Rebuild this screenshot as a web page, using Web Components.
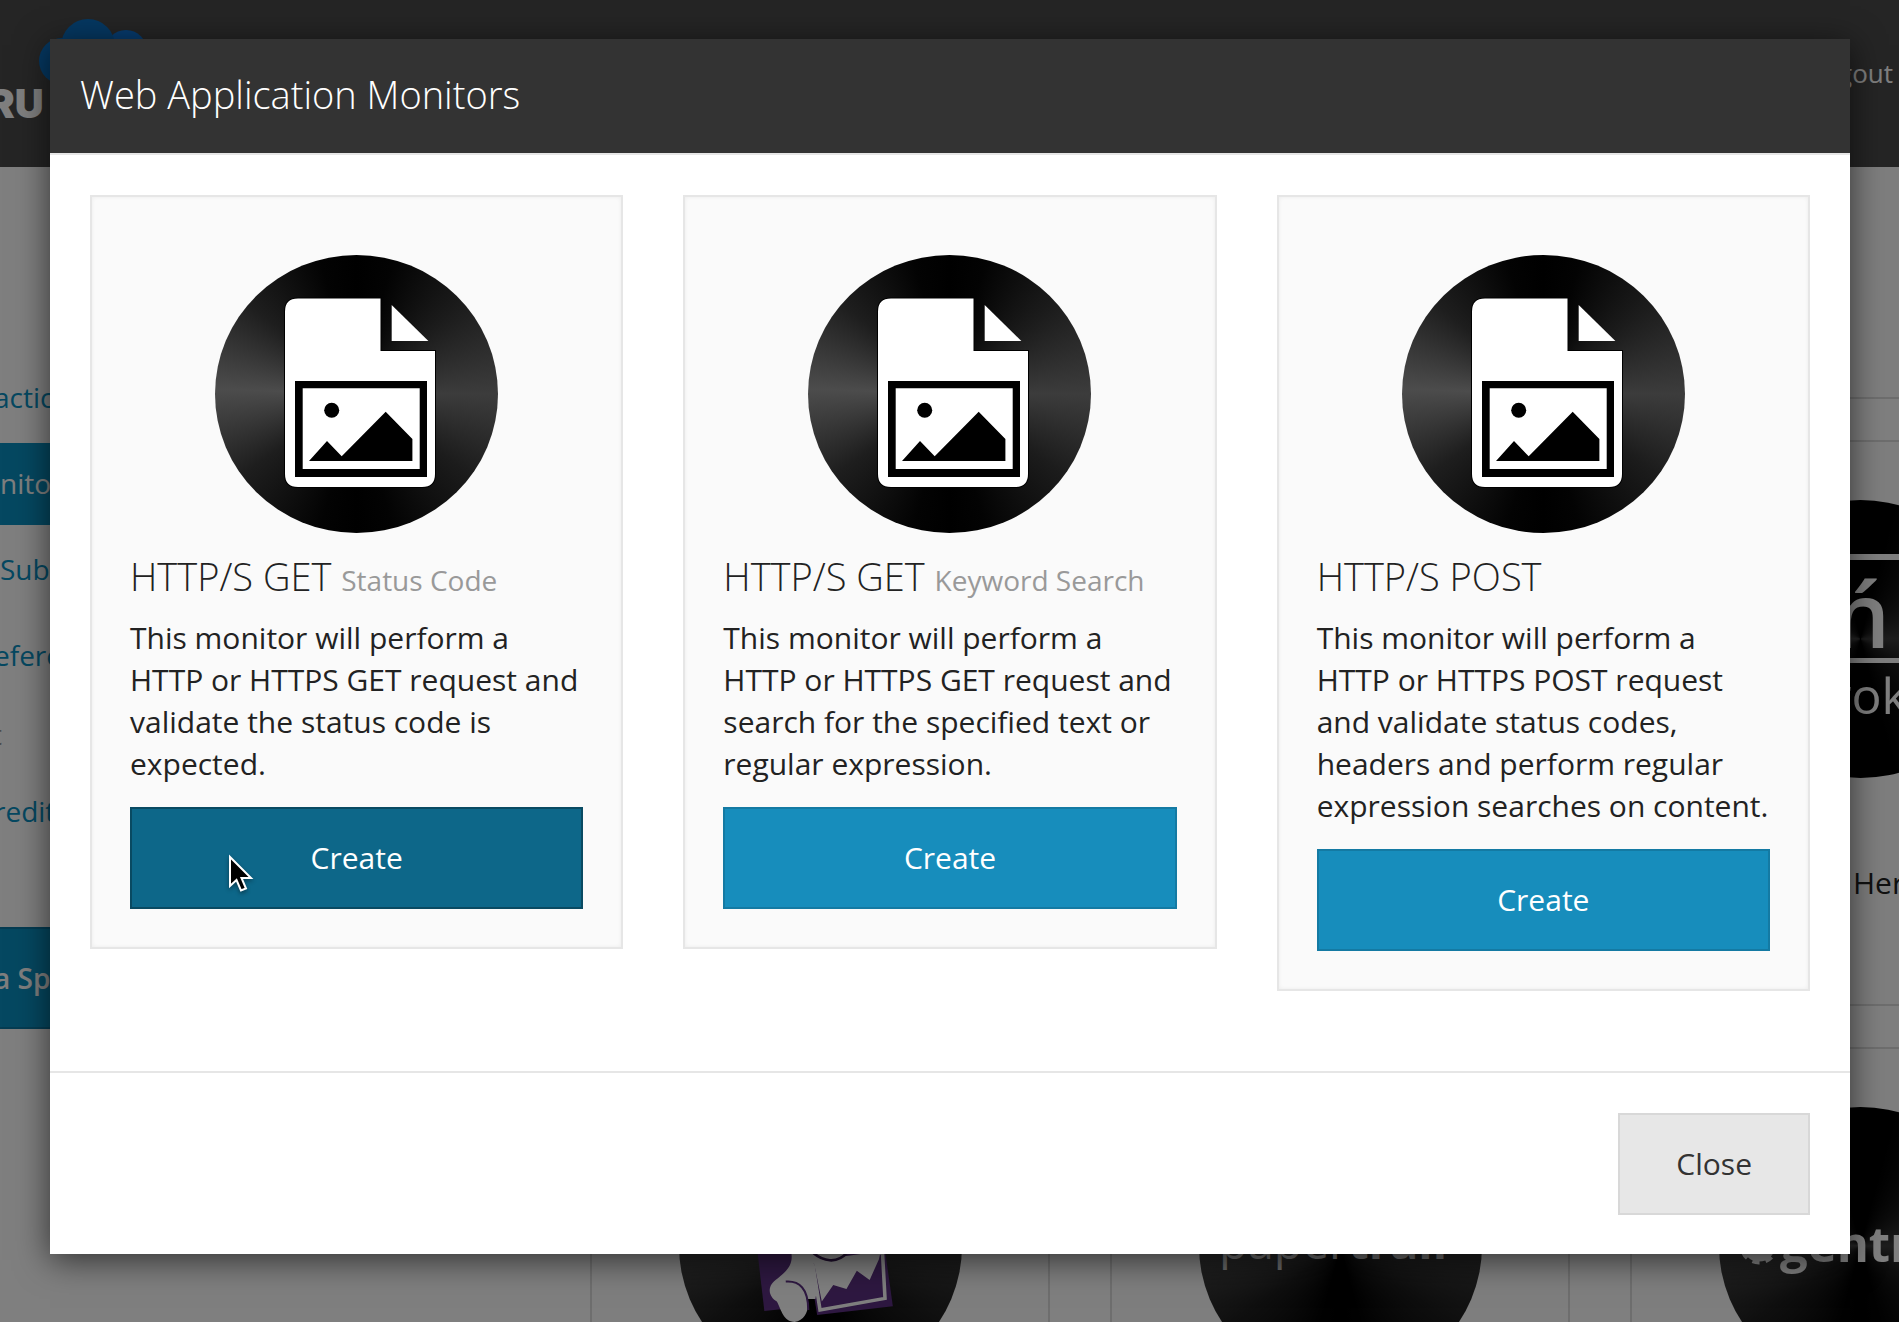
<!DOCTYPE html>
<html lang="en">
<head>
<meta charset="utf-8">
<title>Web Application Monitors</title>
<style>
  html, body { margin: 0; height: 100%; overflow: hidden; }
  body { background: #fff; color: #222; font-family: "Open Sans", "Noto Sans", sans-serif; font-size: 30px; line-height: 42px; }
</style>
</head>
<body>
<monitor-app></monitor-app>
<script>
const define = (name, html) => {
  const tpl = document.createElement('template');
  tpl.innerHTML = html;
  customElements.define(name, class extends HTMLElement {
    constructor() {
      super();
      this.attachShadow({ mode: 'open' }).append(tpl.content.cloneNode(true));
    }
  });
};

/* Brushed metal disc that carries a service logo */
define('disc-badge', `
<style>
  :host { display: block; width: 283px; height: 278px; border-radius: 50%; overflow: hidden;
    background: conic-gradient(#000 0deg, #030303 15deg, #1c1c1c 50deg, #3c3c3c 90deg, #1c1c1c 125deg, #030303 165deg, #000 180deg, #030303 195deg, #1e1e1e 235deg, #4c4c4c 272deg, #1e1e1e 310deg, #030303 345deg, #000 360deg); }
  ::slotted(svg) { display: block; width: 100%; height: 100%; }
</style>
<slot></slot>`);

define('ui-button', `
<style>
  :host { display: block; }
  button { box-sizing: border-box; width: 100%; height: 102px; padding: 0 56px; margin: 0; font: inherit; cursor: pointer;
    border: 2px solid #147aa3; background: #178dbc; color: #fff; border-radius: 0; }
  :host([tone=pressed]) button { background: #0d6789; border-color: #094a62; }
  :host([tone=plain]) button { background: #e7e7e7; border-color: #d8d8d8; color: #333; }
  :host([tone=bleed]) button { padding: 0; border-width: 2px 0; text-align: left; text-indent: -6px; background: #0a90c2; border-color: #0a78a4; }
</style>
<button type="button"><slot></slot></button>`);

define('monitor-card', `
<style>
  :host { display: flex; flex-direction: column; box-sizing: border-box; flex: 1 1 0; min-width: 0; padding: 38px;
    border: 2px solid #e6e6e6; background: #fafafa; box-shadow: inset 0 0 4px rgba(0,0,0,.06); }
  disc-badge { align-self: center; margin: 20px 0 15px; }
  h2 { margin: 0 0 13px; font-weight: 300; font-size: 38px; line-height: 56px; white-space: nowrap; }
  ::slotted(small) { font-size: 28px; line-height: 28px; font-weight: 400; color: #999; }
  p { margin: 0 0 22px; }
</style>
<disc-badge>
  <svg viewBox="0 0 283 278" aria-hidden="true">
    <path d="M83 43.500H165.500V96H220V219Q220 232 207 232H83Q70 232 70 219V56.500Q70 43.500 83 43.500Z" fill="#fff" stroke="#000" stroke-width="2" paint-order="stroke"/>
    <path d="M176.700 50V86H213.400Z" fill="#fff"/>
    <path d="M80 126H212V222H80ZM87.700 133.300V214H204.700V133.300Z" fill="#000" fill-rule="evenodd"/>
    <circle cx="116.700" cy="155.300" r="7.500"/>
    <path d="M94 206 112 186 126.700 201.300 170.700 156.700 197.400 184V206Z"/>
  </svg>
</disc-badge>
<h2><slot name="title"></slot> <slot name="kind"></slot></h2>
<p><slot></slot></p>
<slot name="action"></slot>`);

define('modal-dialog', `
<style>
  :host { display: block; background: #fff; box-shadow: 0 6px 32px rgba(0,0,0,.62); }
  header { padding: 27px 30px 31px; background: #333; color: #fff; border-bottom: 2px solid #e6e6e6; }
  h1 { margin: 0; font-size: 38px; font-weight: 300; line-height: 56px; }
  .cards { display: flex; align-items: flex-start; gap: 60px; padding: 40px 40px 80px; }
  footer { display: flex; justify-content: flex-end; padding: 40px 40px 39px; border-top: 2px solid #e6e6e6; }
</style>
<header><h1><slot name="title"></slot></h1></header>
<div class="cards"><slot></slot></div>
<footer><slot name="footer"></slot></footer>`);

define('site-header', `
<style>
  :host { display: flex; justify-content: space-between; box-sizing: border-box; height: 167px; background: #4b4b4b; color: #fff; }
  svg { display: block; width: 200px; height: 167px; }
  a { margin: 53px 6px 0 0; color: #fff; text-decoration: none; font-size: 26px; line-height: 40px; }
</style>
<svg viewBox="0 0 200 167" role="img">
  <circle cx="62" cy="61" r="23" fill="#0a70c4"/>
  <circle cx="126" cy="51" r="21" fill="#0e76dc"/>
  <circle cx="88" cy="46" r="27" fill="#0a70c4"/>
  <text x="-12" y="118" font-family="Inter" font-weight="900" font-size="40" fill="#fff">RU</text>
</svg>
<a href="#logout">gout</a>`);

define('side-nav', `
<style>
  :host { display: flex; flex-direction: column; flex: none; width: 530px; padding-top: 190px; font-size: 28px; }
  nav { display: flex; flex-direction: column; gap: 4px; }
  a { display: block; line-height: 80px; padding-bottom: 2px; color: #0a90c2; text-decoration: none; }
  a[aria-current] { background: #0a90c2; color: #fff; }
  .bleed { text-indent: -6px; }
  .label { display: flex; justify-content: flex-end; width: 2px; overflow: hidden; line-height: 66px; color: #999; }
  ui-button { margin-top: 74px; font-weight: 600; }
</style>
<nav>
  <a class="bleed" href="#1">actic</a>
  <a href="#2" aria-current="page">nito</a>
  <a href="#3">Sub</a>
  <a class="bleed" href="#4">efere</a>
  <span class="label">t</span>
  <a class="bleed" href="#5">redit</a>
</nav>
<ui-button tone="bleed"><slot></slot></ui-button>`);

define('service-tile', `
<style>
  :host { display: flex; flex-direction: column; box-sizing: border-box; height: 566px; padding: 58px 0 0; border: 2px solid #dcdcdc; background: #fdfdfd; color: #222; }
  :host([empty]) disc-badge { display: none; }
  disc-badge { align-self: center; }
  p { margin: 84px 0 0 221px; white-space: nowrap; }
</style>
<disc-badge><slot name="logo"></slot></disc-badge>
<p><slot></slot></p>`);

define('monitor-app', `
<style>
  :host { display: block; height: 100%; }
  .page { height: 100vh; overflow: hidden; }
  main { display: flex; }
  .tiles { display: grid; flex: none; grid-template-columns: repeat(3, 460px); gap: 41px 60px; margin: -334px 0 0 60px; }
  .scrim { position: absolute; inset: 0; box-sizing: border-box; padding: 39px 49px 0 50px; background: rgba(0,0,0,.5); overflow: hidden; }
  .pointer { position: absolute; left: 227px; top: 853px; width: 28px; height: 42px; filter: drop-shadow(0 2px 2px rgba(0,0,0,.4)); pointer-events: none; }
  .clip { flex: none; height: 1155px; overflow: hidden; }
</style>
<div class="page">
  <site-header></site-header>
  <main>
    <side-nav>a Sp</side-nav>
    <div class="clip">
      <div class="tiles">
        <service-tile empty></service-tile><service-tile empty></service-tile><service-tile empty></service-tile>
        <service-tile></service-tile><service-tile></service-tile>
        <service-tile>
          <svg slot="logo" viewBox="0 0 283 278" fill="#fff">
            <rect x="10" y="54" width="263" height="6"/><rect x="10" y="158" width="263" height="5"/>
            <text x="114" y="148" font-family="Open Sans" font-size="90" font-weight="600">ń</text>
            <text x="112" y="214" font-family="Open Sans" font-size="50" font-weight="500">rok</text>
          </svg>Her</service-tile>
        <service-tile>
          <svg slot="logo" viewBox="0 0 283 278">
            <g transform="translate(-138.500 123) scale(.357 .333)">
              <path d="M605 40 627 243 700 235 960 60V20Z" fill="#5c3082"/>
              <path d="M745 60 775 255 987 229 965 60Z" fill="#5c3082"/>
              <path d="M690 20C715 90 705 110 665 145C630 170 640 200 662 215C675 240 680 276 712 276C745 272 755 230 746 207H770L800 20Z" fill="#fff"/>
              <path d="M687 155C725 152 750 175 750 240" fill="none" stroke="#5c3082" stroke-width="6"/>
              <path d="M762 97 958 68 965 205 783 240Z" fill="#5c3082" stroke="#fff" stroke-width="10"/>
              <path d="M766 98 952 68 948 88 922 150 886 122 857 177 820 165 788 215Z" fill="#fff"/>
              <path d="M765 70C790 92 830 105 860 66" fill="#fff" stroke="#3b1c55" stroke-width="8"/>
            </g>
          </svg></service-tile>
        <service-tile>
          <svg slot="logo" viewBox="0 0 283 278" fill="#ccc">
            <text x="20" y="152" font-family="Open Sans" font-size="47" font-weight="400">paper<tspan font-weight="700">trail</tspan></text>
          </svg></service-tile>
        <service-tile>
          <svg slot="logo" viewBox="0 0 283 278" fill="#fff">
            <circle cx="40" cy="138" r="12" fill="none" stroke="#fff" stroke-width="9" />
            <circle cx="40" cy="138" r="17" fill="none" stroke="#fff" stroke-width="5" stroke-dasharray="7 6"/>
            <text x="61" y="155" font-family="Open Sans" font-size="49" font-weight="700">gentr</text>
          </svg></service-tile>
      </div>
    </div>
  </main>
</div>
<div class="scrim">
  <modal-dialog role="dialog" aria-modal="true">
    <span slot="title">Web Application Monitors</span>
    <monitor-card>
      <span slot="title">HTTP/S GET</span><small slot="kind">Status Code</small>
      This monitor will perform a HTTP or HTTPS GET request and validate the status code is expected.
      <ui-button slot="action" tone="pressed">Create</ui-button>
    </monitor-card>
    <monitor-card>
      <span slot="title">HTTP/S GET</span><small slot="kind">Keyword Search</small>
      This monitor will perform a HTTP or HTTPS GET request and search for the specified text or regular expression.
      <ui-button slot="action">Create</ui-button>
    </monitor-card>
    <monitor-card>
      <span slot="title">HTTP/S POST</span>
      This monitor will perform a HTTP or HTTPS POST request and validate status codes, headers and perform regular expression searches on content.
      <ui-button slot="action">Create</ui-button>
    </monitor-card>
    <ui-button slot="footer" tone="plain">Close</ui-button>
  </modal-dialog>
  <svg class="pointer" viewBox="0 0 28 42" aria-hidden="true">
    <path d="M3 4V33L9.500 27 14 37.500 19 35.500 14.500 25H24Z" fill="#000" stroke="#fff" stroke-width="2"/>
  </svg>
</div>`);
</script>
</body>
</html>
